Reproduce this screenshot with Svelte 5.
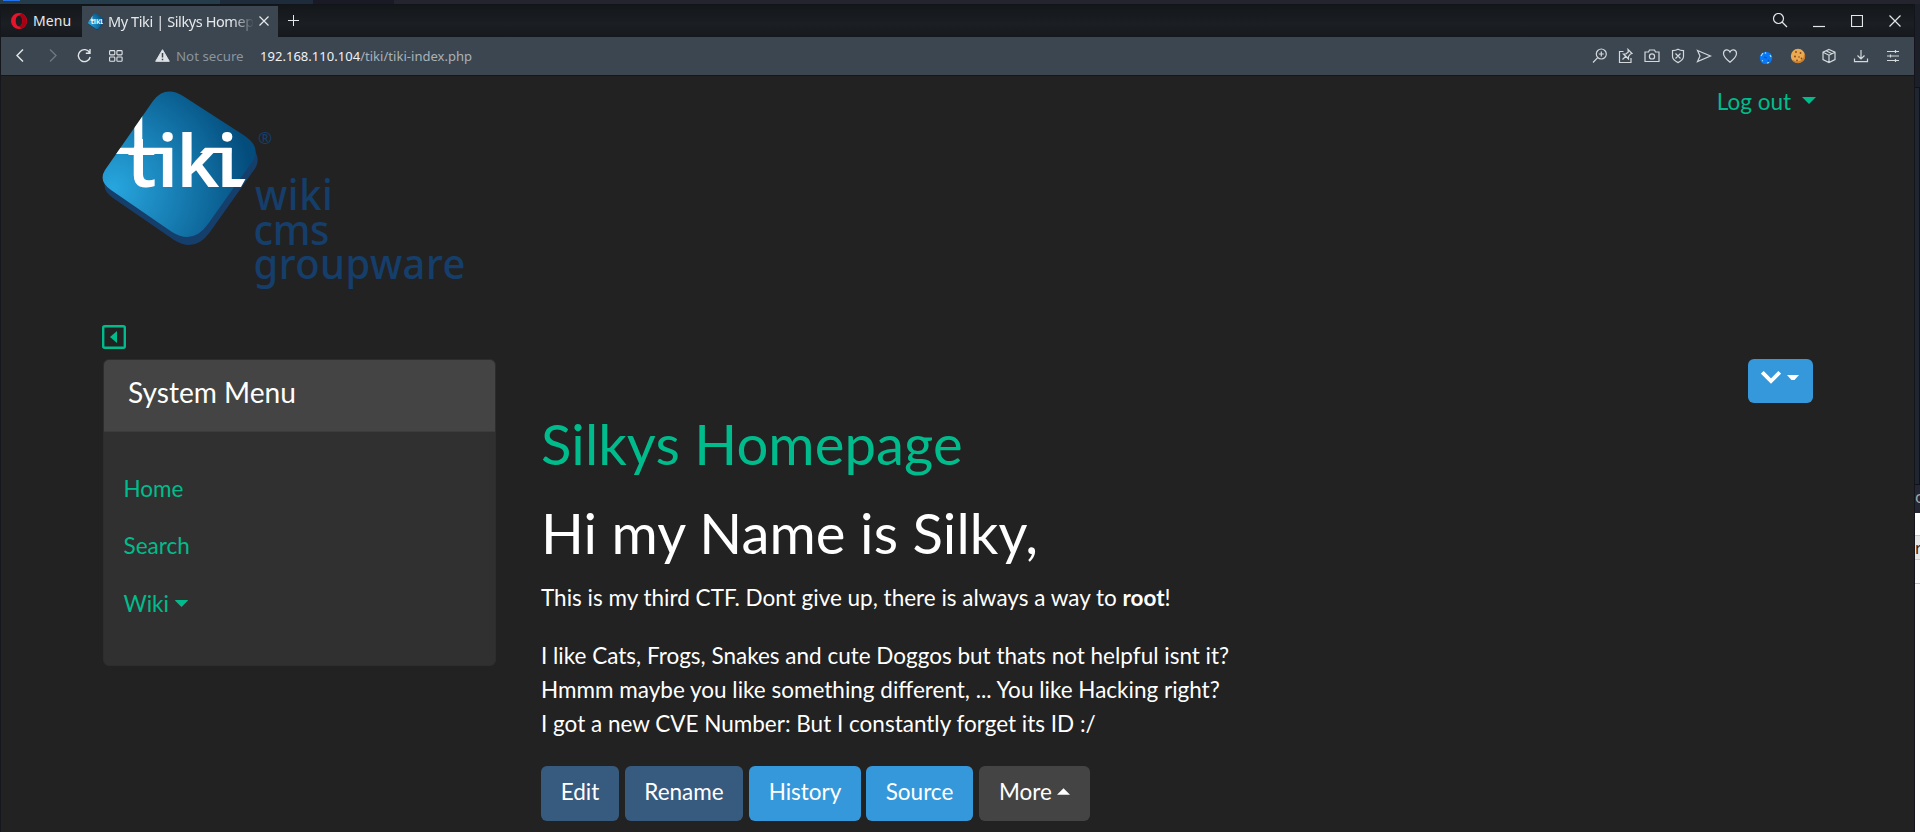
<script>
  const actions = [
    { label: 'Edit', kind: 'primary', w: 78 },
    { label: 'Rename', kind: 'primary', w: 118 },
    { label: 'History', kind: 'info', w: 112 },
    { label: 'Source', kind: 'info', w: 107 },
    { label: 'More', kind: 'dark', w: 111, caret: true }
  ];
  const tile = 'M2 80L50 11Q62-5 80 6L142 46Q159 58 149 72L105 134Q90 155 69 142L8 100Q-5 91 2 80Z';
</script>

{#snippet tikiTile(id)}
  <defs>
    <radialGradient id="{id}-g" gradientUnits="userSpaceOnUse" cx="10" cy="98" r="140">
      <stop offset="0" stop-color="#27a6de" />
      <stop offset=".5" stop-color="#167bb0" />
      <stop offset="1" stop-color="#034c7c" />
    </radialGradient>
    <clipPath id="{id}-c"><path d={tile} /></clipPath>
  </defs>
  <path d={tile} fill="#153e6b" transform="translate(2 8)" />
  <path d={tile} fill="url(#{id}-g)" />
  <g fill="#fff">
    <path clip-path="url(#{id}-c)" d="M31.300 24h8v36h-8zM8 57.700h60.700V64H8z" />
    <path d="M102 57.700h26.300V63H97zM122 89h20.500l-4.500 8h-16z" />
    <text class="mark" y="97" x="24 54.300 73.500 113.800">tiki</text>
  </g>
{/snippet}

<div class="screen">
  <div class="desk"><i class="d1"></i><i class="d2"></i><i class="d3"></i><i class="d4"></i></div>
  <div class="body">
    <div class="window">
      <div class="tabs">
        <div class="menu">
          <svg width="16" height="16" viewBox="0 0 16 16"><path fill="#e8142b" fill-rule="evenodd" d="M8 0a8 8 0 1 0 0 16A8 8 0 0 0 8 0zm0 2.600c1.900 0 3.300 2.300 3.300 5.400S9.900 13.400 8 13.400 4.700 11.100 4.700 8 6.100 2.600 8 2.600z" /><path fill="#a70014" d="M8 2.600C9.500 1 11 .8 12 1.200a8 8 0 0 1 0 13.600c-1 .4-2.500.2-4-1.400 1.900 0 3.300-2.300 3.300-5.400S9.900 2.600 8 2.600z" /></svg>
          <span>Menu</span>
        </div>
        <div class="tab">
          <svg width="17" height="17" viewBox="0 -4 158 160">{@render tikiTile('fav')}</svg>
          <span class="title">My Tiki | Silkys Homepage</span>
          <svg class="x" width="10" height="10" viewBox="0 0 10 10"><path d="M.5.5l9 9M9.500.500l-9 9" stroke="#e8eaec" stroke-width="1.200" /></svg>
        </div>
        <svg class="plus" width="11" height="11" viewBox="0 0 11 11"><path d="M5.500 0v11M0 5.500h11" stroke="#e4e6e8" /></svg>
        <div class="winbtns">
          <svg width="16" height="16" viewBox="0 0 16 16"><circle cx="6.500" cy="5.500" r="5" /><path d="M10 9l5 5" /></svg>
          <svg width="12" height="16" viewBox="0 0 12 16"><path d="M0 13.500h12" /></svg>
          <svg width="12" height="16" viewBox="0 0 12 16"><path d="M.5 2.500h11v11H.5z" /></svg>
          <svg width="12" height="16" viewBox="0 0 12 16"><path d="M.5 2.500l11 11M11.500 2.500l-11 11" /></svg>
        </div>
      </div>
      <div class="bar">
        <svg class="n1" width="8" height="13" viewBox="0 0 8 13"><path d="M7 .5L1 6.500l6 6" stroke-width="1.500" /></svg>
        <svg class="n2" width="8" height="13" viewBox="0 0 8 13"><path d="M1 .5l6 6-6 6" stroke="#6f7981" stroke-width="1.300" /></svg>
        <svg class="n3" width="15" height="15" viewBox="0 0 15 15"><path d="M12.600 4.700A6 6 0 1 0 13.200 9M13 1v4.200H8.800" stroke-width="1.400" /></svg>
        <svg class="n4" width="14" height="12" viewBox="0 0 14 12"><g stroke-width="1.100"><rect x=".6" y=".6" width="5.200" height="4.300" rx=".8" /><rect x="7.900" y=".6" width="5.200" height="4.300" rx=".8" /><rect x=".6" y="7" width="5.200" height="4.300" rx=".8" /><rect x="7.900" y="7" width="5.200" height="4.300" rx=".8" /></g></svg>
        <svg class="n5" width="15" height="13" viewBox="0 0 15 13"><path d="M7.500.7L14.300 12.300H.7z" fill="#dfe2e4" stroke="#dfe2e4" stroke-linejoin="round" /><path d="M7.500 4v4.500M7.500 9.800v1.400" stroke="#3b4651" stroke-width="1.500" /></svg>
        <span class="sec">Not secure</span>
        <span class="url"><b>192.168.110.104</b>/tiki/tiki-index.php</span>
        <div class="tools">
          <svg width="16" height="16" viewBox="0 0 16 16"><circle cx="9.300" cy="6" r="5" /><path d="M5.700 9.700L1 14.500M9.300 3.500v5M6.800 6h5" /></svg>
          <svg width="16" height="16" viewBox="0 0 16 16"><path d="M5.500 3.500h-4v11h11.500V10M4.500 11.500l3.500-3.500M10 1.500l4 4-1.500.5-2 2.500v2.500L5.500 6H8l2.300-2z" /></svg>
          <svg width="16" height="16" viewBox="0 0 16 16"><path d="M1 4h3.500l1-2h5l1 2H15v9.500H1z" /><circle cx="8" cy="8.400" r="2.600" /></svg>
          <svg width="16" height="16" viewBox="0 0 16 16"><path d="M8 1.300c2 1.200 3.500 1.300 5.500 1.300v6c0 3-2.500 4.500-5.500 6-3-1.500-5.500-3-5.500-6v-6C4.500 2.600 6 2.500 8 1.300zM5.500 5.500l5 5M10.500 5.500l-5 5" /></svg>
          <svg width="16" height="16" viewBox="0 0 16 16"><path d="M1.500 2.500L14.500 8l-13 5.500L4 8z" /></svg>
          <svg width="16" height="16" viewBox="0 0 16 16"><path d="M8 14.200C4 11 1.500 8.500 1.500 5.500c0-4 5-5 6.500-1.500C9.500.5 14.500 1.500 14.500 5.500c0 3-2.500 5.500-6.500 8.700z" /></svg>
          <svg width="16" height="16" viewBox="0 0 16 16"><circle cx="8" cy="10" r="6.200" fill="#0878f5" stroke="none" /><path d="M3 8l2-3M7 5.500l1-1M12 7l1 2M9 15l2-.5M4 13l1-.6" stroke="#9fe5ff" /><path d="M6 9l3 1M10 12l1 1" stroke="#0252c8" /></svg>
          <svg width="16" height="16" viewBox="0 0 16 16"><circle cx="8" cy="8" r="7.200" fill="#ecaa50" stroke="none" /><path d="M3 12.500a7 7 0 0 0 11.500-6" stroke="#c87a2a" /><g fill="#8a4a1a" stroke="none"><circle cx="6" cy="4" r=".9" /><circle cx="10.500" cy="5" r=".9" /><circle cx="5" cy="8.500" r="1" /><circle cx="9" cy="9" r=".8" /><circle cx="11.500" cy="10.500" r=".9" /><circle cx="7" cy="12.500" r=".9" /></g></svg>
          <svg width="16" height="16" viewBox="0 0 16 16"><path d="M8 1.500l6 2.700v7.400l-6 3-6-3V4.200zM2 4.200l6 3 6-3M8 7.200v7.400M5 2.800l6 2.900" /></svg>
          <svg width="16" height="16" viewBox="0 0 16 16"><path d="M8 2v8.500M4.500 7.500L8 11l3.500-3.500M1.500 10.500v3.200h13v-3.200" /></svg>
          <svg width="16" height="16" viewBox="0 0 16 16"><path d="M2 3.500h12M2 8h12M2 12.500h12M10.500 2v3M5.500 6.500v3M10.500 11v3" /></svg>
        </div>
      </div>
      <div class="page">
        <header>
          <svg class="logo" width="362" height="200" viewBox="0 0 362 200">
            {@render tikiTile('logo')}
            <g fill="#153e6b">
              <text class="reg" x="155" y="54">®</text>
              <text class="word" transform="translate(152 119.500) scale(.95 1)" textLength="82">wiki</text>
              <text class="word" transform="translate(150.500 154.500) scale(.95 1)" textLength="80">cms</text>
              <text class="word" transform="translate(150.500 188.500) scale(.95 1)" textLength="223">groupware</text>
            </g>
          </svg>
          <a class="logout" href="#logout"><span>Log out</span><svg width="14" height="7" viewBox="0 0 14 7"><path d="M0 0h14L7 7z" /></svg></a>
        </header>
        <svg class="toggle" width="24" height="24" viewBox="0 0 24 24"><rect x="1.200" y="1.200" width="21.600" height="21.600" rx="1.500" fill="none" stroke="#00bc8c" stroke-width="2.400" /><path d="M15 6v12l-7-6z" fill="#00bc8c" /></svg>
        <div class="cols">
          <aside>
            <h3>System Menu</h3>
            <nav>
              <a href="#home">Home</a>
              <a href="#search">Search</a>
              <a href="#wiki">Wiki<svg width="13" height="7" viewBox="0 0 13 7"><path d="M0 .5Q0 0 .5 0h12q.5 0 .5.500L6.500 7z" /></svg></a>
            </nav>
          </aside>
          <main>
            <div class="top">
              <button class="drop" aria-label="Page actions">
                <svg width="20" height="13" viewBox="0 0 20 13"><path d="M1.300 1.300L10 10l8.700-8.700" fill="none" stroke="#fff" stroke-width="3.800" /></svg>
                <svg width="12" height="6" viewBox="0 0 12 6"><path d="M0 0h12L7.500 5h-3z" fill="#fff" /></svg>
              </button>
            </div>
            <h1 class="green">Silkys Homepage</h1>
            <h1>Hi my Name is Silky,</h1>
            <p>This is my third CTF. Dont give up, there is always a way to <strong>root</strong>!</p>
            <p>I like Cats, Frogs, Snakes and cute Doggos but thats not helpful isnt it?<br />Hmmm maybe you like something different, ... You like Hacking right?<br />I got a new CVE Number: But I constantly forget its ID :/</p>
            <div class="actions">
              {#each actions as a}
                <button class={a.kind} style="width:{a.w}px">{a.label}{#if a.caret}<svg width="13" height="7" viewBox="0 0 12 6"><path d="M0 6h12L6 0z" fill="#fff" /></svg>{/if}</button>
              {/each}
            </div>
          </main>
        </div>
      </div>
    </div>
    <div class="behind">
      <div class="b1"></div><div class="b2"></div><div class="b3">c</div><div class="b4"></div><div class="b5">r</div><div class="b6"></div>
    </div>
  </div>
</div>

<style>
  :global(body) { margin: 0; background: #14181c; overflow: hidden; }
  * { box-sizing: border-box; }
  svg { display: block; flex: none; }
  .screen { width: 1920px; height: 832px; display: flex; flex-direction: column; overflow: hidden; }
  .desk { height: 4px; display: flex; background: #24242f; }
  .desk i { display: block; height: 4px; }
  .d1 { width: 21px; background: linear-gradient(90deg, #2374ec, #2374ec) 3px 0 / 17px 1px no-repeat #253d4b; }
  .d2 { width: 199px; background: #253d4b; }
  .d3 { width: 93px; background: #1e2b3a; }
  .d4 { width: 81px; background: #1a1a26; }
  .body { flex: 1; display: flex; min-height: 0; }
  .window { width: 1914px; padding-left: 1px; display: flex; flex-direction: column; background: #14181c; }
  .tabs { height: 33px; display: flex; align-items: center; background: linear-gradient(#13171a, #1b1f24 60%, #15181c); font: 14.500px "Noto Sans", sans-serif; color: #e6e8ea; border-top: 1px solid #11151a; }
  .menu { width: 81px; display: flex; align-items: center; padding-left: 10px; gap: 6px; font-size: 14px; }
  .menu span { margin-top: -1px; letter-spacing: .1px; }
  .tab { width: 196px; height: 31px; align-self: flex-end; background: #3b4651; display: flex; align-items: center; padding-left: 6px; }
  .title { width: 145px; margin: -2px 0 0 3px; overflow: hidden; white-space: nowrap; letter-spacing: -.4px; mask-image: linear-gradient(90deg, #000 125px, transparent 146px); }
  .x { margin-left: 6px; margin-top: -1px; }
  .plus { margin-left: 10px; margin-top: -1px; }
  .winbtns { margin-left: auto; display: flex; padding-right: 13px; }
  .winbtns svg { fill: none; stroke: #e4e6e8; stroke-width: 1.200; }
  .winbtns svg + svg { margin-left: 26px; }
  .winbtns svg:nth-child(2) { margin-left: 25px; }
  .bar { height: 38px; background: #3b4651; display: flex; align-items: center; font: 13px "Noto Sans", sans-serif; color: #aab2b8; white-space: nowrap; padding-bottom: 1px; }
  .bar svg { fill: none; stroke: #e2e5e7; }
  .n1 { margin-left: 15px; } .n2 { margin-left: 25px; } .n3 { margin-left: 20px; } .n4 { margin-left: 17px; } .bar .n5 { margin-left: 32px; }
  .sec { margin-left: 6px; width: 84px; color: #8b959d; font-size: 13.300px; }
  .url { letter-spacing: .03px; }
  .url b { font-weight: 400; color: #f0f2f3; }
  .tools { margin-left: auto; display: flex; padding-right: 13px; }
  .tools svg { margin-left: 10px; stroke-width: 1.200; stroke: #d4d8db; }
  .tools svg:nth-child(7) { margin-left: 20px; }
  .tools svg:nth-child(8) { margin-left: 16px; }
  .tools svg:nth-child(9) { margin-left: 15px; }
  .tools svg:nth-child(10), .tools svg:nth-child(11) { margin-left: 16px; }
  .page { flex: 1; min-height: 0; margin-top: 1px; background: #222; padding: 14px 99px 0 102px; font: 22.500px/33.750px Lato, sans-serif; color: #fff; display: flex; flex-direction: column; }
  header { height: 235px; flex: none; display: flex; justify-content: space-between; align-items: flex-start; }
  .logo { overflow: visible; }
  .mark { font: 600 73px "Noto Sans", sans-serif; }
  .reg { font: 17px "Noto Sans", sans-serif; }
  .word { font: 500 42px "Noto Sans", sans-serif; }
  a { color: #00bc8c; text-decoration: none; display: flex; align-items: center; }
  a svg { fill: #00bc8c; }
  .logout { margin: -5px -1px 0 0; gap: 11px; }
  .logout svg { margin-top: -3px; }
  .toggle { flex: none; margin-left: -1px; }
  .cols { display: flex; margin-top: 10px; }
  aside { width: 393px; height: 307px; background: #303030; border: 1px solid #2d2d2d; border-radius: 6px; overflow: hidden; }
  h3 { margin: 0; height: 72px; background: #444; border-bottom: 1px solid #3c3c3c; padding: 15px 24px 0; font-size: 28.125px; line-height: 34px; font-weight: 400; }
  nav { padding: 40px 19.500px 0; display: flex; flex-direction: column; gap: 23.500px; }
  nav a svg { margin-left: 6px; }
  main { margin-left: 45px; flex: 1; }
  .top { display: flex; justify-content: flex-end; height: 51px; }
  button { font: inherit; color: #fff; border: 0; border-radius: 6px; padding: 0; display: flex; align-items: center; justify-content: center; }
  .drop { width: 65px; height: 44px; background: #3498db; gap: 6px; padding: 0 1px 7px 0; margin-right: 2px; }
  h1 { font-size: 56.250px; line-height: 67.500px; letter-spacing: .06px; font-weight: 400; margin: 0 0 14.900px; }
  h1.green { color: #00bc8c; margin-bottom: 21.500px; }
  p { margin: 0 0 24px; white-space: nowrap; }
  .actions { display: flex; gap: 6px; margin-top: 25.500px; }
  .actions button { height: 55px; padding-bottom: 3px; flex: none; gap: 5px; }
  .actions button:nth-child(4) { margin-left: -1px; }
  .primary { background: #375a7f; } .info { background: #3498db; } .dark { background: #444; }
  .behind { width: 6px; border-left: 1px solid #14141c; background: #fcfcfc; color: #a5a5a5; font: 16px/24px "Noto Sans", sans-serif; display: flex; flex-direction: column; }
  .behind div { overflow: hidden; flex: none; }
  .b1 { height: 84px; background: #1c1f28; border-bottom: 1px solid #111119; } .b2 { height: 397px; background: linear-gradient(90deg, #1f2630 4px, #12121c 4px); border-bottom: 1px solid #11111b; }
  .b3 { height: 28px; background: #242733; } .b4 { height: 22px; background: #fff; }
  .b5 { height: 25px; background: #e8e8e8; color: #222; border: solid #ccc; border-width: 1px 0; } .b6 { height: 24px; border-bottom: 1px solid #ccc; }
</style>
